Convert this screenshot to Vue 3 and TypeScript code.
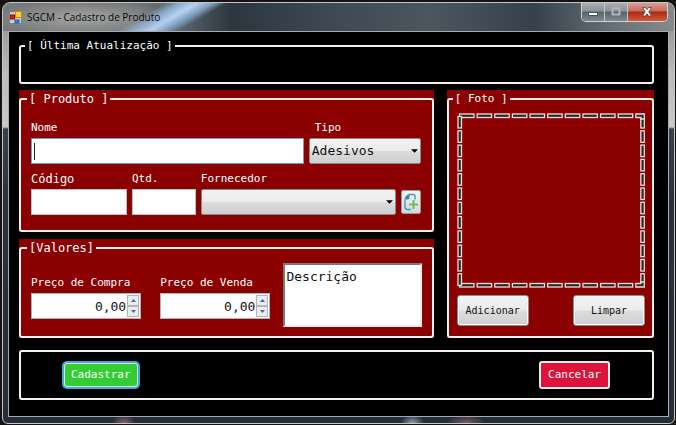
<script setup lang="ts">
import { onMounted, ref } from 'vue'

const nome = ref('')
const tipo = ref('Adesivos')
const codigo = ref('')
const quantidade = ref('')
const fornecedor = ref('')
const descricao = ref('Descrição')
const tipos: string[] = ['Adesivos']

interface Preco {
  id: string
  label: string
  valor: number
}

const precos = ref<Preco[]>([
  { id: 'compra', label: 'Preço de Compra', valor: 0 },
  { id: 'venda', label: 'Preço de Venda', valor: 0 },
])

const nomeInput = ref<HTMLInputElement | null>(null)

function formatar(valor: number): string {
  return valor.toFixed(2).replace('.', ',')
}

function passo(preco: Preco, delta: number): void {
  preco.valor = Math.max(0, preco.valor + delta)
}

function editar(preco: Preco, evento: Event): void {
  const texto = (evento.target as HTMLInputElement).value
  const valor = Number(texto.replace(',', '.'))
  if (!Number.isNaN(valor)) preco.valor = Math.max(0, valor)
}

// Start points of the dashes along the horizontal and vertical edges of the photo frame
const colunas = Array.from({ length: 10 }, (_, i) => 2.5 + i * 17.7)
const linhas = Array.from({ length: 12 }, (_, i) => 3.5 + i * 14.3)

onMounted(() => nomeInput.value?.focus())
</script>

<template>
  <div class="desktop">
    <main class="window">
      <header class="titlebar">
        <svg class="app-icon" viewBox="0 0 12 13" aria-hidden="true">
          <rect x="0" y="1" width="11" height="11" fill="#c9cdd0" />
          <rect x="5.5" y="0.5" width="6" height="6" fill="#ffd23a" stroke="#c98d00" />
          <rect x="0.5" y="4" width="4" height="4" fill="#d21f1c" stroke="#8e1210" />
          <rect x="5" y="9" width="4" height="3" fill="#3b7de0" stroke="#2a5bb0" />
        </svg>
        <h1 class="title">SGCM - Cadastro de Produto</h1>
        <div class="caption">
          <button type="button" class="cap" aria-label="Minimizar">
            <svg viewBox="0 0 12 12"><rect x="1.5" y="6.5" width="9" height="3" fill="#fff" stroke="#4b5258" /></svg>
          </button>
          <button type="button" class="cap max" aria-label="Maximizar">
            <svg viewBox="0 0 12 12"><rect x="2.5" y="2.5" width="7" height="6" fill="none" stroke="#b3b7ba" stroke-width="2" /></svg>
          </button>
          <button type="button" class="cap close" aria-label="Fechar">
            <svg viewBox="0 0 12 12">
              <path d="M1.5 1.5H4.5L6 3.6 7.5 1.5H10.5L7.8 5.7 10.5 10H7.5L6 7.8 4.5 10H1.5L4.2 5.7Z" fill="#fff" stroke="#5a3a3a" stroke-width="0.8" />
            </svg>
          </button>
        </div>
      </header>

      <form class="client" @submit.prevent>
        <fieldset class="group update">
          <legend>[ Última Atualização ]</legend>
        </fieldset>

        <div class="columns">
          <div class="left">
            <section class="panel">
              <fieldset class="group product">
                <legend class="large">[ Produto ]</legend>
                <div class="row first">
                  <div class="field">
                    <label for="nome">Nome</label>
                    <input id="nome" ref="nomeInput" v-model="nome" :class="{ empty: !nome }" type="text" />
                  </div>
                  <div class="field">
                    <label for="tipo" class="indent">Tipo</label>
                    <span class="combo">
                      <select id="tipo" v-model="tipo">
                        <option v-for="t in tipos" :key="t">{{ t }}</option>
                      </select>
                      <svg class="arrow" viewBox="0 0 8 4"><path d="M0 0H8L4 4Z" /></svg>
                    </span>
                  </div>
                </div>
                <div class="row second">
                  <div class="field">
                    <label for="codigo" class="large">Código</label>
                    <input id="codigo" v-model="codigo" type="text" />
                  </div>
                  <div class="field">
                    <label for="qtd">Qtd.</label>
                    <input id="qtd" v-model="quantidade" type="text" />
                  </div>
                  <div class="field">
                    <label for="fornecedor">Fornecedor</label>
                    <span class="combo">
                      <select id="fornecedor" v-model="fornecedor">
                        <option value=""></option>
                      </select>
                      <svg class="arrow" viewBox="0 0 8 4"><path d="M0 0H8L4 4Z" /></svg>
                    </span>
                  </div>
                  <button type="button" class="add" aria-label="Novo fornecedor">
                    <svg viewBox="0 0 16 18">
                      <path d="M5.5 1.5H10Q12 1.5 12 3.5V6.5M2 6.5V14Q2 16.5 4.5 16.5H8" fill="none" stroke="#3f9cc4" stroke-width="1.4" />
                      <path d="M1.5 6.5Q2 2 6.5 1V4.5Q6.5 6.5 4.5 6.5Z" fill="#2b8fc0" />
                      <path d="M10.5 7V16M6 11.5H15" fill="none" stroke="#5cc45c" stroke-width="2" />
                    </svg>
                  </button>
                </div>
              </fieldset>
            </section>

            <section class="panel">
              <fieldset class="group values">
                <legend class="large">[Valores]</legend>
                <div class="row prices">
                  <div v-for="preco in precos" :key="preco.id" class="field">
                    <label :for="preco.id">{{ preco.label }}</label>
                    <span class="spin">
                      <input :id="preco.id" type="text" inputmode="decimal" :value="formatar(preco.valor)" @change="editar(preco, $event)" />
                      <span class="steps">
                        <button type="button" aria-label="Aumentar" @click="passo(preco, 1)">
                          <svg viewBox="0 0 5 3"><path d="M0 3H5L2.5 0Z" /></svg>
                        </button>
                        <button type="button" aria-label="Diminuir" @click="passo(preco, -1)">
                          <svg viewBox="0 0 5 3"><path d="M0 0H5L2.5 3Z" /></svg>
                        </button>
                      </span>
                    </span>
                  </div>
                  <textarea v-model="descricao" aria-label="Descrição"></textarea>
                </div>
              </fieldset>
            </section>
          </div>

          <section class="panel">
            <fieldset class="group photo">
              <legend>[ Foto ]</legend>
              <svg class="frame" viewBox="0 0 189 175" preserveAspectRatio="none" aria-hidden="true">
                <g fill="#222a2a" stroke="#f3dcdc" stroke-width="1.3">
                  <rect v-for="x in colunas" :key="'t' + x" :x="x" y="1" width="14.5" height="3.5" />
                  <rect v-for="x in colunas" :key="'b' + x" :x="x" y="170.5" width="14.5" height="3.5" />
                  <rect v-for="y in linhas" :key="'l' + y" x="1" :y="y" width="3.5" height="11.5" />
                  <rect v-for="y in linhas" :key="'r' + y" x="184.5" :y="y" width="3.5" height="11.5" />
                  <path d="M179.500 1H188V6H184.500V4.500H179.500Z" />
                  <path d="M179.500 170.500H184.500V169H188V174H179.500Z" />
                </g>
              </svg>
              <div class="photo-actions">
                <button type="button" class="grey">Adicionar</button>
                <button type="button" class="grey">Limpar</button>
              </div>
            </fieldset>
          </section>
        </div>

        <div class="group footer">
          <button type="submit" class="action save">Cadastrar</button>
          <button type="button" class="action cancel">Cancelar</button>
        </div>
      </form>
    </main>
  </div>
</template>

<style>
body {
  background: #16120f;
}
</style>

<style scoped>
* {
  box-sizing: border-box;
}

.desktop {
  min-height: 100vh;
  padding: 2px 1px 1px 2px;
  display: flex;
  font: 11px/16px "DejaVu Sans Mono", monospace;
  color: #fff;
}

.window {
  flex: 1;
  min-width: 0;
  display: flex;
  flex-direction: column;
  padding: 0 5px 6px;
  border: 1px solid #c4c8ca;
  border-radius: 8px 8px 6px 6px;
  background:
    radial-gradient(ellipse 12px 8px at 18% 100%, #8c6470, transparent),
    radial-gradient(ellipse 12px 8px at 61% 100%, #8fa0b8, transparent),
    radial-gradient(ellipse 20px 8px at 69% 100%, #7a5c66, transparent),
    linear-gradient(#84888b 0, #b9bcbf 70px, #c8cacc 124px, #38424c 126px, #29323c 200px, #252d38 100%);
}

.titlebar {
  display: flex;
  align-items: center;
  height: 28px;
  margin: 0 -5px;
  padding: 0 6px 0 7px;
  border-radius: 7px 7px 0 0;
  background:
    radial-gradient(ellipse 90px 18px at 12% 55%, #a5a5a3, transparent),
    linear-gradient(150deg, transparent 81px, #86a6c8 88px, #b5d2f0 97px, #7e9fc0 105px, transparent 112px),
    linear-gradient(90deg, #77797a 0, #707476 19%, #59626a 27%, #2d363f 34%, #3d4852 48%, #4b565f 64%, #36414c 79%, #677077 91%, #858a8d 100%);
}

.app-icon {
  width: 12px;
  height: 13px;
}

.title {
  flex: 1;
  margin: 0 0 0 5px;
  font: 400 10px/16px "Open Sans", sans-serif;
  color: #0a0a0a;
}

.caption {
  display: flex;
  align-self: flex-start;
  border: 1px solid #d0d3d5;
  border-top: 0;
  border-radius: 0 0 5px 5px;
  overflow: hidden;
}

.cap {
  width: 23px;
  height: 18px;
  padding: 3px 5px;
  border: 0;
  border-right: 1px solid #c3c7ca;
  background: linear-gradient(#a9afb3, #8b9297 45%, #596168 50%, #808990);
}

.cap svg {
  display: block;
  width: 12px;
  height: 12px;
}

.cap.close {
  width: 39px;
  padding: 3px 13px;
  border-right: 0;
  background: linear-gradient(#d9a093, #c76a58 45%, #ab2a14 50%, #cf5a3c);
}

.client {
  flex: 1;
  display: flex;
  flex-direction: column;
  padding: 5px 14px 15px 10px;
  border: 1px solid #a5abaf;
  background: #000;
}

.group {
  min-width: 0;
  margin: 0;
  border: 2px solid #f4f0f0;
  border-radius: 3px;
}

legend {
  margin-left: 4px;
  padding: 0 2px;
  line-height: 18px;
}

.panel legend {
  margin-left: -4px;
}

.large {
  font-size: 12px;
}

.update {
  height: 47px;
  padding: 0;
}

.columns {
  display: grid;
  grid-template-columns: 2fr 1fr;
  gap: 13px;
  margin: 6px 0 12px;
}

.left {
  display: flex;
  flex-direction: column;
  gap: 7px;
}

.panel {
  display: flex;
  background: #8b0000;
}

.panel .group {
  flex: 1;
}

.product {
  padding: 12px 11px 15px 10px;
}

.row {
  display: grid;
}

.first {
  grid-template-columns: 273fr 112fr;
  gap: 5px;
}

.second {
  grid-template-columns: 96fr 64fr 195fr 20px;
  align-items: end;
  gap: 5px;
  margin-top: 7px;
}

.field {
  display: flex;
  flex-direction: column;
  min-width: 0;
}

.field label {
  height: 18px;
}

.indent {
  padding-left: 6px;
}

input,
select,
textarea {
  width: 100%;
  min-width: 0;
  margin: 0;
  font: 13px/18px "DejaVu Sans Mono", monospace;
  color: #111;
  outline: 0;
}

input {
  height: 26px;
  padding: 0 3px;
  border: 1px solid #b9c3cc;
  background: #fff;
}

#nome {
  border-color: #6f9fc4;
  caret-color: #111;
}

#nome.empty:focus {
  caret-color: transparent;
  background: linear-gradient(#222, #222) 2px 50% / 1px 17px no-repeat #fff;
}

.combo {
  display: grid;
  align-items: center;
}

.combo select {
  grid-area: 1 / 1;
  height: 26px;
  padding: 0 18px 0 2px;
  appearance: none;
  border: 1px solid #8a8a8a;
  border-radius: 2px;
  background: linear-gradient(#f3f3f3, #ebebeb 48%, #dcdcdc 52%, #cfcfcf);
}

.arrow {
  grid-area: 1 / 1;
  justify-self: end;
  width: 7px;
  height: 4px;
  margin-right: 3px;
  pointer-events: none;
}

.add {
  height: 24px;
  margin-bottom: 1px;
  padding: 2px 1px;
  border: 1px solid #9a9a9a;
  border-radius: 2px;
  background: linear-gradient(#f3f3f3, #e6e6e6 50%, #d6d6d6);
}

.add svg {
  display: block;
  width: 16px;
  height: 18px;
}

.values {
  padding: 6px 10px 9px;
}

.prices {
  grid-template-columns: 116fr 110fr 138fr;
  align-items: end;
  gap: 13px;
}

.prices .field {
  padding-bottom: 8px;
}

.prices .field:first-child {
  padding-right: 6px;
}

.spin {
  display: flex;
  height: 26px;
  padding: 1px;
  border: 1px solid #a9b4bf;
  background: #fff;
}

.spin input {
  flex: 1;
  height: 22px;
  padding: 0 1px;
  border: 0;
  text-align: right;
}

.steps {
  display: grid;
  width: 12px;
}

.steps button {
  display: grid;
  place-items: center;
  padding: 0;
  border: 1px solid #b4b4b8;
  background: #ececee;
}

.steps svg {
  width: 5px;
  height: 3px;
  fill: #4a62a8;
}

textarea {
  display: block;
  height: 64px;
  padding: 3px 1px;
  border: 2px solid;
  border-color: #7a7a7a #eee #eee #7a7a7a;
  background: #fff;
  resize: none;
}

.photo {
  display: flex;
  flex-direction: column;
  padding: 5px 7px 10px 8px;
}

.frame {
  display: block;
  width: 100%;
  height: 175px;
}

.photo-actions {
  display: flex;
  justify-content: space-between;
  margin-top: 7px;
}

.grey {
  width: 72px;
  height: 31px;
  padding: 0;
  border: 1px solid #8c8c8c;
  border-radius: 3px;
  background: linear-gradient(#f3f3f3, #ebebeb 48%, #dcdcdc 52%, #cfcfcf);
  box-shadow: inset 0 0 0 1px #fafafa;
  font: 10px/16px "DejaVu Sans Mono", monospace;
  color: #111;
}

.footer {
  display: flex;
  justify-content: space-between;
  align-items: center;
  height: 50px;
  padding: 0 42px 0 41px;
}

.action {
  height: 28px;
  padding: 0 4px;
  border: 2px solid #ececec;
  border-radius: 3px;
  font: 11px/16px "DejaVu Sans Mono", monospace;
  color: #fff;
}

.save {
  border: 1px solid #e0f0e8;
  margin: 0 2px;
  height: 24px;
  padding: 0 6px;
  background: #32cd32;
  box-shadow: 0 0 0 2px #3fa9dc;
}

.cancel {
  padding: 0 7px;
  background: #dc143c;
}
</style>
